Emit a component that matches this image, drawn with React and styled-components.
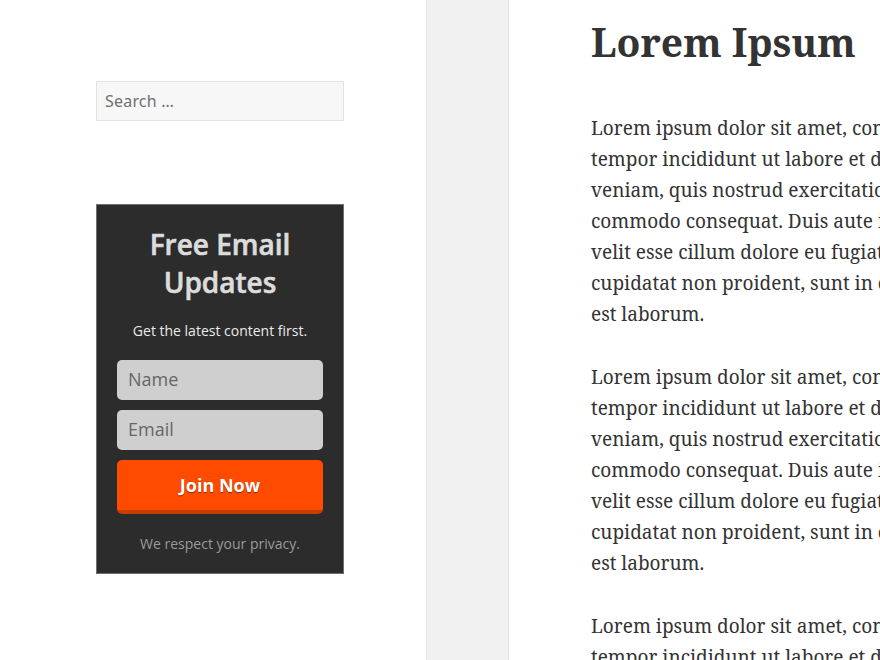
import React from "react";
import styled, { createGlobalStyle } from "styled-components";

const Global = createGlobalStyle`
  html, body { margin: 0; padding: 0; background: #fff; }
  body { width: 880px; height: 660px; overflow: hidden; }
  * { box-sizing: border-box; }
`;

const Page = styled.div`
  display: flex;
  width: 880px;
  height: 660px;
  overflow: hidden;
`;

const Sidebar = styled.aside`
  flex: 0 0 427px;
  border-right: 1px solid #e8e8e8;
  background: #fff;
  padding: 81px 0 0 96px;
`;

const Strip = styled.div`
  flex: 0 0 82px;
  background: #f1f1f1;
  border-right: 1px solid #e4e4e4;
`;

const Content = styled.main`
  flex: 1 1 auto;
  min-width: 0;
  overflow: hidden;
  padding: 14px 0 0 82px;
  font-family: "Noto Serif", "DejaVu Serif", serif;
  color: #333;
`;

const SearchInput = styled.input`
  display: block;
  width: 248px;
  height: 40px;
  background: #f7f7f7;
  border: 1px solid #e3e3e3;
  padding: 0 8px;
  font-family: "Noto Sans", "Open Sans", sans-serif;
  font-size: 16px;
  letter-spacing: 0.2px;
  color: #707070;
  outline: none;
  &::placeholder { color: #6f6f6f; }
`;

const Widget = styled.section`
  margin-top: 83px;
  width: 248px;
  height: 370px;
  background: #2c2c2c;
  border: 1px solid #6e6e6e;
  padding: 20px 20px 0;
  display: flex;
  flex-direction: column;
  align-items: stretch;
  font-family: "Open Sans", "Noto Sans", sans-serif;
  text-align: center;
`;

const WidgetTitle = styled.h2`
  margin: 0;
  font-size: 28px;
  line-height: 38px;
  font-weight: 600;
  color: #dcdcdc;
  -webkit-text-stroke: 0.6px #dcdcdc;
`;

const WidgetLead = styled.p`
  margin: 20px 0 0;
  font-size: 14px;
  line-height: 20px;
  color: #eaeaea;
`;

const Field = styled.input`
  display: block;
  width: 100%;
  height: 40px;
  margin-top: ${(p) => p.$top}px;
  background: #cfcfcf;
  border: none;
  border-radius: 5px;
  padding: 0 11px 3px;
  font-family: "Open Sans", "Noto Sans", sans-serif;
  font-size: 18px;
  color: #555;
  outline: none;
  &::placeholder { color: #666; }
`;

const JoinButton = styled.button`
  display: block;
  width: 100%;
  height: 54px;
  margin-top: 10px;
  background: #ff4b00;
  border: none;
  border-bottom: 4px solid #c73d02;
  border-radius: 5px;
  font-family: "Open Sans", "Noto Sans", sans-serif;
  font-weight: 700;
  font-size: 18px;
  color: #fff;
  text-shadow: 0 1px 1px rgba(0, 0, 0, 0.45);
  padding: 0;
  cursor: pointer;
`;

const Privacy = styled.p`
  margin: 20px 0 0;
  font-size: 14px;
  line-height: 20px;
  color: #9a9a9a;
`;

const Heading = styled.h1`
  margin: 0;
  font-size: 39px;
  line-height: 56px;
  font-weight: 700;
  color: #333;
  white-space: nowrap;
`;

const Paragraph = styled.p`
  margin: ${(p) => p.$top}px 0 0;
  font-size: 19px;
  line-height: 31px;
  white-space: nowrap;
`;

const Line = styled.span`
  display: block;
`;

const loremLines = [
  "Lorem ipsum dolor sit amet, consectetur adipiscing elit, sed do eiusmod",
  "tempor incididunt ut labore et dolore magna aliqua. Ut enim ad minim",
  "veniam, quis nostrud exercitation ullamco laboris nisi ut aliquip ex ea",
  "commodo consequat. Duis aute irure dolor in reprehenderit in voluptate",
  "velit esse cillum dolore eu fugiat nulla pariatur. Excepteur sint occaecat",
  "cupidatat non proident, sunt in culpa qui officia deserunt mollit anim id",
  "est laborum.",
];

function Lorem({ top }) {
  return (
    <Paragraph $top={top}>
      {loremLines.map((l, i) => (
        <Line key={i}>{l}</Line>
      ))}
    </Paragraph>
  );
}

export default function App() {
  return (
    <>
      <Global />
      <Page>
        <Sidebar>
          <SearchInput placeholder="Search …" />
          <Widget>
            <WidgetTitle>
              Free Email
              <br />
              Updates
            </WidgetTitle>
            <WidgetLead>Get the latest content first.</WidgetLead>
            <Field $top={19} placeholder="Name" />
            <Field $top={10} placeholder="Email" />
            <JoinButton>Join Now</JoinButton>
            <Privacy>We respect your privacy.</Privacy>
          </Widget>
        </Sidebar>
        <Strip />
        <Content>
          <Heading>Lorem Ipsum</Heading>
          <Lorem top={43} />
          <Lorem top={32} />
          <Lorem top={32} />
        </Content>
      </Page>
    </>
  );
}
